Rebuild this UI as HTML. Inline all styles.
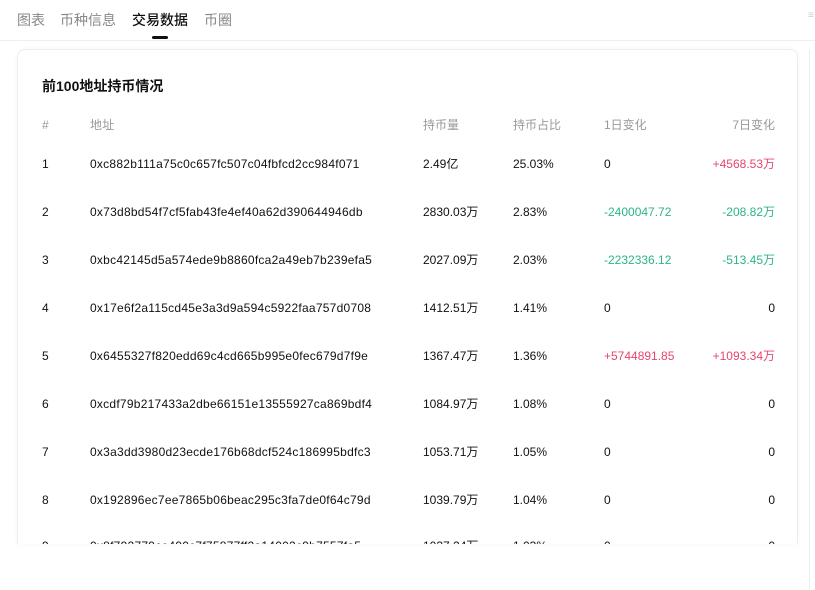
<!DOCTYPE html>
<html><head><meta charset="utf-8"><style>
*{margin:0;padding:0;box-sizing:border-box}
body{width:815px;height:590px;background:#fff;font-family:"Liberation Sans","Noto Sans CJK SC",sans-serif;position:relative;overflow:hidden;color:#111}
.tabs{position:absolute;top:10px;left:17px;font-size:14px;color:#888;white-space:nowrap}
.tabs span{position:absolute;top:0}
.tabs .on{color:#111;font-weight:500}
.ul{position:absolute;left:152px;top:36px;width:16px;height:3px;background:#111;border-radius:2px}
.hr{position:absolute;left:0;top:40px;width:815px;height:1px;background:#efefef}
.card{position:absolute;left:17px;top:49px;width:781px;height:495px;border:1px solid #eee;border-bottom:none;border-radius:8px 8px 0 0;overflow:hidden;box-shadow:0 0 6px rgba(0,0,0,0.04)}
.title{position:absolute;left:24px;top:26px;font-size:14px;font-weight:bold}
.row{position:absolute;left:0;width:781px;height:20px;font-size:12px;line-height:20px}
.row span{position:absolute;top:0;white-space:nowrap}
.h{color:#999}
.c1{left:24px}.c2{left:72px;letter-spacing:0.25px}.c3{left:405px}.c4{left:495px}.c5{left:586px}.c6{right:24px;text-align:right}
.g{color:#2bb58a}.r{color:#e8456b}
.side{position:absolute;left:809px;top:50px;width:1px;height:540px;background:#eee}
</style></head><body>
<div class="tabs"><span style="left:0">图表</span><span style="left:43px">币种信息</span><span class="on" style="left:115px">交易数据</span><span style="left:187px">币圈</span></div>
<div class="ul"></div>
<div class="hr"></div>
<div style="position:absolute;left:808px;top:10px;font-size:10px;color:#ccc">≡</div>
<div class="side"></div>
<div class="card">
<div class="title">前100地址持币情况</div>
<div class="row h" style="top:65px"><span class="c1">#</span><span class="c2">地址</span><span class="c3">持币量</span><span class="c4">持币占比</span><span class="c5">1日变化</span><span class="c6">7日变化</span></div>
<div class="row" style="top:104px"><span class="c1">1</span><span class="c2">0xc882b111a75c0c657fc507c04fbfcd2cc984f071</span><span class="c3">2.49亿</span><span class="c4">25.03%</span><span class="c5">0</span><span class="c6 r">+4568.53万</span></div>
<div class="row" style="top:152px"><span class="c1">2</span><span class="c2">0x73d8bd54f7cf5fab43fe4ef40a62d390644946db</span><span class="c3">2830.03万</span><span class="c4">2.83%</span><span class="c5 g">-2400047.72</span><span class="c6 g">-208.82万</span></div>
<div class="row" style="top:200px"><span class="c1">3</span><span class="c2">0xbc42145d5a574ede9b8860fca2a49eb7b239efa5</span><span class="c3">2027.09万</span><span class="c4">2.03%</span><span class="c5 g">-2232336.12</span><span class="c6 g">-513.45万</span></div>
<div class="row" style="top:248px"><span class="c1">4</span><span class="c2">0x17e6f2a115cd45e3a3d9a594c5922faa757d0708</span><span class="c3">1412.51万</span><span class="c4">1.41%</span><span class="c5">0</span><span class="c6">0</span></div>
<div class="row" style="top:296px"><span class="c1">5</span><span class="c2">0x6455327f820edd69c4cd665b995e0fec679d7f9e</span><span class="c3">1367.47万</span><span class="c4">1.36%</span><span class="c5 r">+5744891.85</span><span class="c6 r">+1093.34万</span></div>
<div class="row" style="top:344px"><span class="c1">6</span><span class="c2">0xcdf79b217433a2dbe66151e13555927ca869bdf4</span><span class="c3">1084.97万</span><span class="c4">1.08%</span><span class="c5">0</span><span class="c6">0</span></div>
<div class="row" style="top:392px"><span class="c1">7</span><span class="c2">0x3a3dd3980d23ecde176b68dcf524c186995bdfc3</span><span class="c3">1053.71万</span><span class="c4">1.05%</span><span class="c5">0</span><span class="c6">0</span></div>
<div class="row" style="top:440px"><span class="c1">8</span><span class="c2">0x192896ec7ee7865b06beac295c3fa7de0f64c79d</span><span class="c3">1039.79万</span><span class="c4">1.04%</span><span class="c5">0</span><span class="c6">0</span></div>
<div class="row" style="top:486px"><span class="c1">9</span><span class="c2">0x8f792779ce490c7f75877ff2a14002c9b7557fa5</span><span class="c3">1037.24万</span><span class="c4">1.03%</span><span class="c5">0</span><span class="c6">0</span></div>
</div>
</body></html>
